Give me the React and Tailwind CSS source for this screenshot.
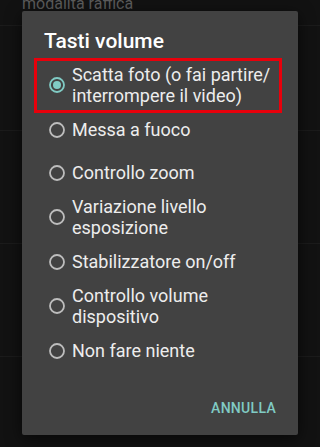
const OPTIONS = [
  { id: 'shutter', label: ['Scatta foto (o fai partire/', 'interrompere il video)'] },
  { id: 'focus', label: ['Messa a fuoco'] },
  { id: 'zoom', label: ['Controllo zoom'] },
  { id: 'exposure', label: ['Variazione livello', 'esposizione'] },
  { id: 'stab', label: ['Stabilizzatore on/off'] },
  { id: 'volume', label: ['Controllo volume', 'dispositivo'] },
  { id: 'none', label: ['Non fare niente'] },
];

function Radio({ checked }) {
  return (
    <svg className="w-4 h-4 shrink-0" viewBox="0 0 16 16">
      <circle cx="8" cy="8" r="7" fill="none" stroke={checked ? '#80cbc4' : '#bdbdbd'} strokeWidth="1.8" />
      {checked && <circle cx="8" cy="8" r="4" fill="#80cbc4" />}
    </svg>
  );
}

export default function App() {
  const selected = 'shutter';

  return (
    <div className="relative w-[320px] h-[447px] bg-[#121212] overflow-hidden" style={{ fontFamily: 'Roboto, "Noto Sans", sans-serif' }}>
      {/* settings list behind the dialog */}
      <div className="flex flex-col">
        <div className="h-[32px] border-b border-[#1b1b1b] pl-[22px] -mt-[6px] text-[16px] leading-[20px] text-[#5c5c5c]">
          modalità raffica
        </div>
        <div className="h-[105px] border-b border-[#1b1b1b]" />
        <div className="h-[113px] border-b border-[#1b1b1b]" />
        <div className="h-[113px] border-b border-[#1b1b1b]" />
      </div>

      <div className="absolute left-[22px] top-[11px] w-[276px] h-[424px] bg-[#424242] rounded-[2px] shadow-[0_4px_16px_rgba(0,0,0,0.6)] flex flex-col">
        <h2 className="pt-[16px] pl-[22px] text-[21px] leading-[28px] font-medium text-white">Tasti volume</h2>

        <ul className="mt-[7px] flex flex-col">
          {OPTIONS.map((o) => (
            <li
              key={o.id}
              className={`flex items-center gap-[7px] pl-[27px] text-[18px] leading-[21px] text-[#ededed] ${o.label.length > 1 ? 'py-[2px]' : 'min-h-[43px]'}`}
            >
              <Radio checked={o.id === selected} />
              <span className="flex flex-col">
                {o.label.map((l) => (
                  <span key={l}>{l}</span>
                ))}
              </span>
            </li>
          ))}
        </ul>

        <div className="flex-1" />
        <div className="flex justify-end pr-[22px] pb-[17px]">
          <button className="text-[14px] leading-[20px] font-medium tracking-[0.3px] text-[#80cbc4]">ANNULLA</button>
        </div>

        {/* highlight box */}
        <div className="absolute left-[12px] top-[47px] w-[248px] h-[55px] border-[3px] border-[#e8000b] pointer-events-none" />
      </div>
    </div>
  );
}
